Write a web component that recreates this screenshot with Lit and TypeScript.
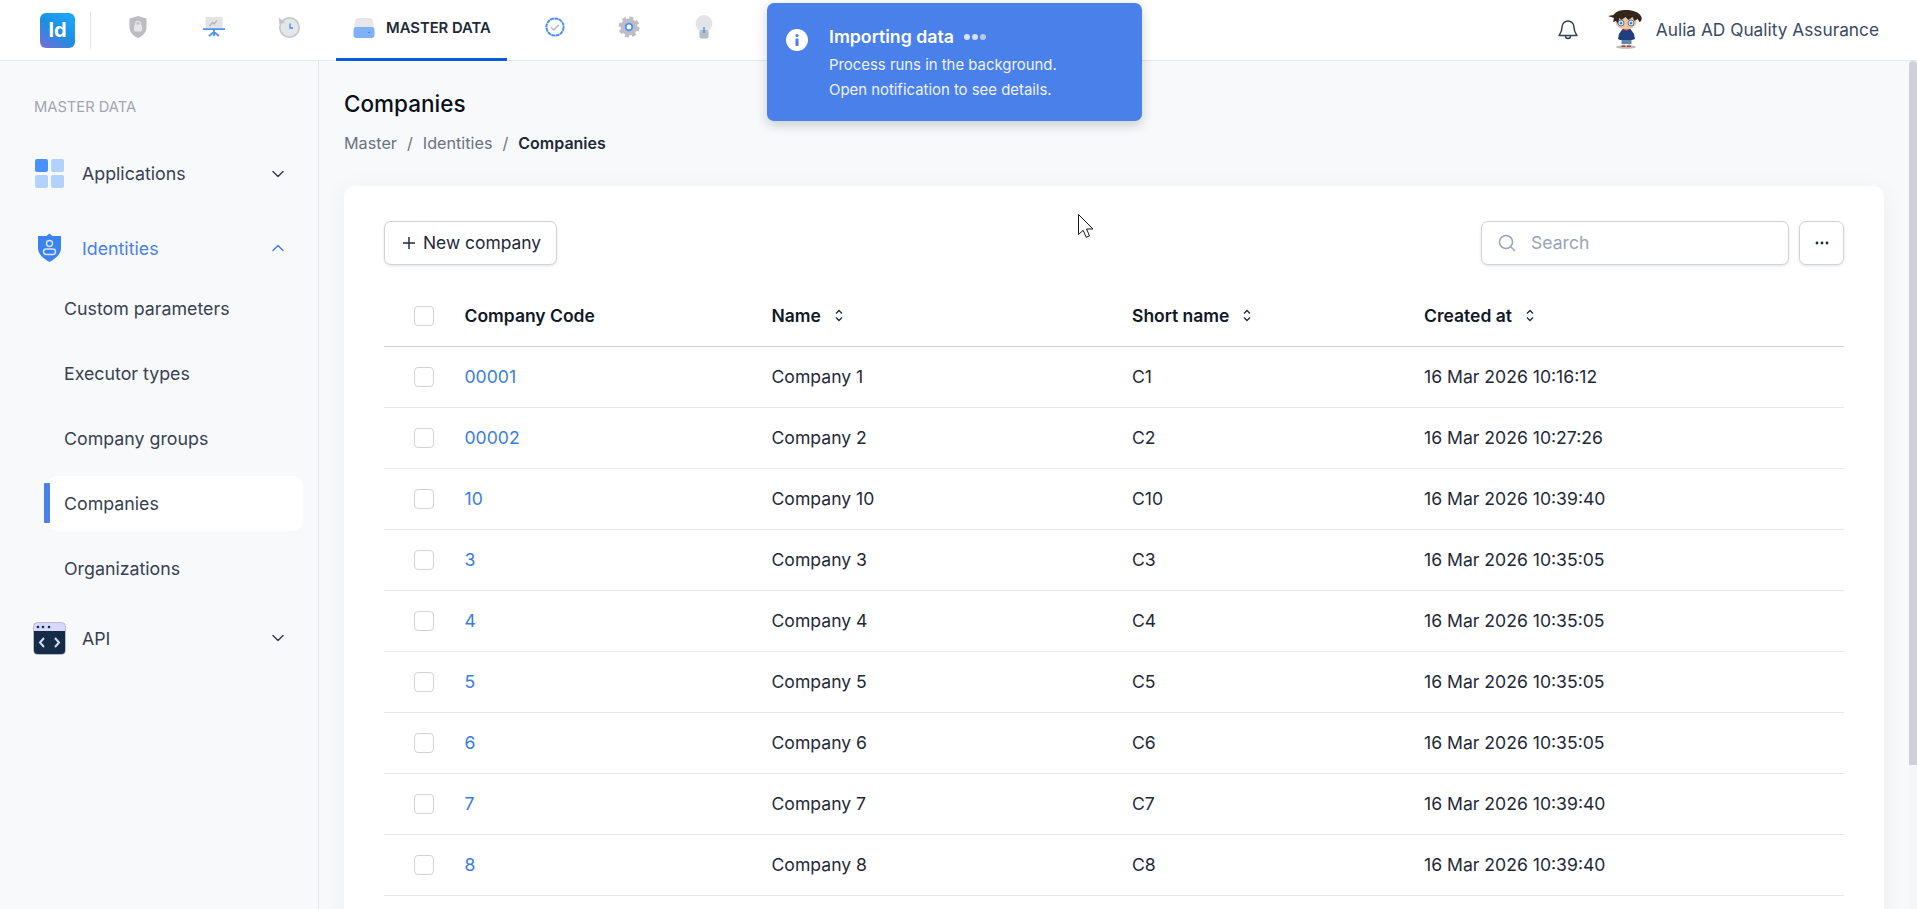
import { LitElement, html, css, svg } from "lit";
import { customElement } from "lit/decorators.js";

const rows = [
  ["00001", "Company 1", "C1", "16 Mar 2026 10:16:12"],
  ["00002", "Company 2", "C2", "16 Mar 2026 10:27:26"],
  ["10", "Company 10", "C10", "16 Mar 2026 10:39:40"],
  ["3", "Company 3", "C3", "16 Mar 2026 10:35:05"],
  ["4", "Company 4", "C4", "16 Mar 2026 10:35:05"],
  ["5", "Company 5", "C5", "16 Mar 2026 10:35:05"],
  ["6", "Company 6", "C6", "16 Mar 2026 10:35:05"],
  ["7", "Company 7", "C7", "16 Mar 2026 10:39:40"],
  ["8", "Company 8", "C8", "16 Mar 2026 10:39:40"],
];

const shieldIcon = html`<svg width="22" height="24" viewBox="0 0 22 24">
  <path d="M11 1l8.5 2.6v8.6c0 5-3.6 8.800-8.500 10.800C6.100 21 2.500 17.200 2.500 12.200V3.600z" fill="#bcbcc1"/>
  <rect x="7" y="9.500" width="8" height="7" rx="1.500" fill="#e6e6e9"/>
  <path d="M8.800 10V8.500a2.200 2.200 0 014.400 0V10" fill="none" stroke="#e6e6e9" stroke-width="1.300"/>
</svg>`;

const boardIcon = html`<svg width="24" height="24" viewBox="0 0 24 24">
  <rect x="3.500" y="2" width="17" height="12" fill="#e3e3e6"/>
  <path d="M7.500 11l3-3.500 1.500 1.500 3-3.500" fill="none" stroke="#b4b4ba" stroke-width="1.200"/>
  <rect x="1" y="13.300" width="22" height="1.700" fill="#4a90f5"/>
  <path d="M12 15v6M12 17l-5 4M12 17l5 4" fill="none" stroke="#4a90f5" stroke-width="1.800"/>
</svg>`;

const historyIcon = html`<svg width="24" height="24" viewBox="0 0 24 24">
  <circle cx="12.500" cy="12.500" r="9.700" fill="#e5e6ea" stroke="#c5c6cb" stroke-width="1.600"/>
  <path d="M1.800 2.500l.5 6.500 6-1.500z" fill="#c5c6cb"/>
  <path d="M13 8.500V13h3" fill="none" stroke="#3f8cf2" stroke-width="1.300"/>
</svg>`;

const driveIcon = html`<svg width="22" height="22" viewBox="0 0 22 22">
  <path d="M1 12L2 4C2.200 2 3.500 1 5.500 1h11c2 0 3.300 1 3.500 3l1 8z" fill="#e7e7e9"/>
  <rect x="0.500" y="10" width="21" height="11" rx="3" fill="#7fb0fa"/>
  <circle cx="16" cy="15.500" r=".8" fill="#3f7fe0"/>
</svg>`;

const checkIcon = html`<svg width="22" height="22" viewBox="0 0 22 22">
  <circle cx="11" cy="11" r="8.600" fill="#fff" stroke="#4a90f5" stroke-width="2" stroke-dasharray="3.900 .5"/>
  <path d="M7 11.300l2.800 2.600 5-5" fill="none" stroke="#bdbdc2" stroke-width="1.700"/>
</svg>`;

const gearIcon = html`<svg width="22" height="22" viewBox="0 0 22 22">
  <circle cx="11" cy="11" r="8.500" fill="#bdbdc5"/>
  <circle cx="11" cy="11" r="9" fill="none" stroke="#bdbdc5" stroke-width="3" stroke-dasharray="4 3.070"/>
  <circle cx="11" cy="11" r="3.300" fill="#fff" stroke="#4a90f5" stroke-width="1.800"/>
</svg>`;

const bulbIcon = html`<svg width="20" height="26" viewBox="0 0 20 26">
  <path d="M10 1a8.500 8.500 0 00-8.500 8.500c0 3.500 2.300 5.300 3.800 7.500h9.400c1.500-2.200 3.800-4 3.800-7.500A8.500 8.500 0 0010 1z" fill="#e4e4e7"/>
  <rect x="5.500" y="16" width="9" height="8.500" rx="2" fill="#bcbcc3"/>
  <rect x="9.300" y="13" width="1.400" height="6" fill="#4a90f5"/>
</svg>`;

const avatar = svg`<svg width="36" height="40" viewBox="0 0 36 40">
  <ellipse cx="18" cy="37" rx="10" ry="1.800" fill="#b9bbb9"/>
  <rect x="14" y="33" width="3" height="3.500" fill="#e8d8c8"/><rect x="19.500" y="33" width="3" height="3.500" fill="#e8d8c8"/>
  <rect x="13.500" y="35.500" width="4" height="1.400" fill="#a33"/><rect x="19" y="35.500" width="4" height="1.400" fill="#a33"/>
  <path d="M13.500 28h10v6h-10z" fill="#6384ab"/>
  <path d="M14.500 19h8l3.500 5 1 5-3 1H12l-2-1 1-5z" fill="#1f3f7f"/>
  <path d="M15.500 19h6l-3 2.500z" fill="#c9302c"/>
  <ellipse cx="18" cy="12" rx="10.500" ry="7.500" fill="#eec49c"/>
  <path d="M0 6l5.500-1C8 1 13 0 18 0c7 0 13 2 15.500 7 .5 2.500 0 4.500-2 5l-2-3-3 2-2-4-4 3-3-3-4 3-2-2-1.500 6-2-3-3 1 1-4z" fill="#33241d"/>
  <circle cx="13" cy="13" r="3" fill="#cfe0f0" stroke="#4d6e9c" stroke-width=".9"/>
  <circle cx="23" cy="13" r="3" fill="#cfe0f0" stroke="#4d6e9c" stroke-width=".9"/>
  <circle cx="13" cy="13.200" r="1.100" fill="#2f6fb5"/><circle cx="23" cy="13.200" r="1.100" fill="#2f6fb5"/>
</svg>`;

const chevronDown = html`<svg class="chev" width="14" height="14" viewBox="0 0 14 14"><path d="M2 4.500l5 5 5-5" fill="none" stroke="#374151" stroke-width="1.500" stroke-linecap="round" stroke-linejoin="round"/></svg>`;
const chevronUp = html`<svg class="chev" width="14" height="14" viewBox="0 0 14 14"><path d="M2 9.500l5-5 5 5" fill="none" stroke="#4a80ea" stroke-width="1.500" stroke-linecap="round" stroke-linejoin="round"/></svg>`;
const sortIcon = html`<svg class="sort" width="8" height="13" viewBox="0 0 8 13"><path d="M1 4.500l3-3 3 3M1 8.500l3 3 3-3" fill="none" stroke="#1f2937" stroke-width="1.300"/></svg>`;

@customElement("app-root")
export class AppRoot extends LitElement {
  static styles = css`
    :host {
      display: block;
      height: 909px;
      overflow: hidden;
      position: relative;
      font-family: Inter, "Noto Sans", sans-serif;
      font-size: 17.6px;
      color: #1f2937;
      background: #f8f9fb;
    }
    .topbar {
      height: 60px;
      border-bottom: 1px solid #e8e9ec;
      background: #fff;
      display: flex;
      align-items: center;
      padding-left: 40px;
    }
    .logo {
      width: 35px;
      height: 35px;
      border-radius: 6px;
      background: linear-gradient(215deg, #1ca6fb 10%, #1b8fe2 50%, #7a6bd8 100%);
      color: #fff;
      font-size: 20px;
      font-weight: 700;
      display: flex;
      align-items: center;
      justify-content: center;
    }
    .divider {
      width: 1px;
      height: 37px;
      background: #e3e4e7;
      margin: 0 15px;
    }
    .nav-icon {
      width: 75px;
      height: 60px;
      display: flex;
      align-items: center;
      justify-content: center;
      padding-bottom: 6px;
      box-sizing: border-box;
    }
    .tab {
      height: 60px;
      width: 171px;
      margin: 0 10px 0 10px;
      box-sizing: border-box;
      border-bottom: 3px solid #0a5bd6;
      display: flex;
      align-items: center;
      padding: 0 0 3px 17px;
      gap: 11px;
      font-size: 14.800px;
      font-weight: 600;
      color: #1f2937;
      margin-bottom: -1px;
    }
    .spacer {
      flex: 1;
    }
    .bell {
      display: block;
      margin-right: 29px;
    }
    .user {
      display: flex;
      align-items: center;
      gap: 12px;
      padding-right: 38px;
      font-size: 17.300px;
      color: #3a4a63;
    }
    .user span {
      padding-bottom: 2px;
    }
    .body {
      display: flex;
      height: 848px;
    }
    .sidebar {
      width: 319px;
      flex: none;
      box-sizing: border-box;
      border-right: 1px solid #e5e6ea;
      padding-top: 35.500px;
      font-size: 17.800px;
      color: #374151;
    }
    .side-title {
      font-size: 14.700px;
      color: #a1a6b1;
      padding-left: 34px;
      line-height: 20px;
      margin-bottom: 29.500px;
    }
    .group {
      display: flex;
      align-items: center;
      height: 55px;
      position: relative;
      padding-left: 82px;
      padding-right: 33px;
    }
    .group svg.ic {
      position: absolute;
    }
    .group .label {
      flex: 1;
    }
    .group.open {
      color: #4a80ea;
      margin-top: 19.500px;
    }
    .chev {
      display: block;
    }
    .sub {
      height: 55px;
      margin: 0 15px 10px 47px;
      padding-left: 17px;
      display: flex;
      align-items: center;
      border-radius: 10px;
      position: relative;
    }
    .subs {
      margin-top: 5px;
    }
    .sub.active {
      background: #fff;
    }
    .sub.active::before {
      content: "";
      position: absolute;
      left: -3px;
      top: 7px;
      width: 6px;
      height: 40px;
      background: #4a80ea;
      border-radius: 1px;
    }
    .api {
      margin-top: 15px;
    }
    .main {
      flex: 1;
      padding: 0 25px;
      overflow: hidden;
    }
    h1 {
      margin: 0;
      padding-top: 28px;
      font-size: 22.500px;
      line-height: 30px;
      font-weight: 500;
      color: #0b0f19;
    }
    .crumbs {
      display: flex;
      gap: 10px;
      margin-top: 12px;
      font-size: 16.200px;
      line-height: 24px;
      color: #6b7280;
    }
    .crumbs b {
      font-size: 16px;
      font-weight: 600;
      color: #1f2937;
    }
    .card {
      margin-top: 31px;
      height: 800px;
      background: #fff;
      border-radius: 10px;
      padding: 35px 40px 0;
      box-shadow: 0 4px 24px rgba(17, 24, 39, 0.05);
    }
    .toolbar {
      display: flex;
      align-items: center;
      gap: 10px;
      margin-bottom: 20px;
    }
    .btn {
      height: 44px;
      box-sizing: border-box;
      display: flex;
      align-items: center;
      border: 1px solid #d1d3da;
      border-radius: 7px;
      background: #fff;
      box-shadow: 0 1px 3px rgba(17, 24, 39, 0.12);
    }
    .btn span {
      padding-bottom: 2px;
    }
    .new {
      width: 173px;
      padding-left: 17px;
      gap: 7px;
      font-size: 17.400px;
      color: #1f2937;
    }
    .search {
      width: 308px;
      margin-left: auto;
      padding-left: 15px;
      gap: 14px;
      color: #9ca3b4;
    }
    .more {
      width: 45px;
      justify-content: center;
    }
    table {
      border-collapse: collapse;
      table-layout: fixed;
      width: 1460px;
    }
    th,
    td {
      height: 60px;
      padding: 0;
      text-align: left;
      border-bottom: 1px solid #e6e7ea;
    }
    td a,
    .cell {
      position: relative;
      top: -1px;
    }
    th {
      height: 61px;
      font-size: 17.500px;
      font-weight: 600;
      color: #111827;
      border-bottom-color: #cfd1d9;
    }
    th .head {
      display: flex;
      align-items: center;
      gap: 14px;
    }
    .box {
      display: block;
      width: 20px;
      height: 20px;
      margin-left: 30px;
      box-sizing: border-box;
      border: 1px solid #d1d3da;
      border-radius: 4px;
      background: #fff;
    }
    td a {
      color: #3b7ddd;
      text-decoration: none;
    }
    .scroll {
      width: 8px;
      flex: none;
      position: relative;
      background: #f5f6f8;
    }
    .thumb {
      position: absolute;
      left: 0;
      top: 0;
      width: 8px;
      height: 704px;
      background: #ced1da;
      border-radius: 4px 4px 0 0;
    }
    .toast {
      position: absolute;
      left: 767px;
      top: 3px;
      width: 375px;
      height: 118px;
      box-sizing: border-box;
      background: #4a80ea;
      border-radius: 7px;
      box-shadow: 0 4px 12px rgba(17, 24, 39, 0.2);
      color: #fff;
      padding: 21px 0 0 62px;
    }
    .toast svg.info {
      position: absolute;
      left: 19px;
      top: 26px;
    }
    .toast .t {
      display: flex;
      align-items: center;
      gap: 10px;
      font-size: 17.700px;
      font-weight: 600;
      line-height: 26px;
    }
    .dots {
      display: flex;
      gap: 2px;
    }
    .dots i {
      width: 6px;
      height: 6px;
      border-radius: 50%;
      background: #d5e2fb;
    }
    .dots i:last-child {
      background: #b9c8e6;
    }
    .toast p {
      margin: 3px 0 0;
      font-size: 14.900px;
      line-height: 25px;
      color: #eef3fe;
    }
    .cursor {
      position: absolute;
      left: 1078px;
      top: 214px;
    }
  `;

  render() {
    return html`
      <div class="topbar">
        <div class="logo">Id</div>
        <div class="divider"></div>
        <div class="nav-icon" style="margin-left:-6px">${shieldIcon}</div>
        <div class="nav-icon" style="margin-left:1px">${boardIcon}</div>
        <div class="nav-icon">${historyIcon}</div>
        <div class="tab">${driveIcon}<span>MASTER DATA</span></div>
        <div class="nav-icon">${checkIcon}</div>
        <div class="nav-icon" style="margin-left:-1px">${gearIcon}</div>
        <div class="nav-icon">${bulbIcon}</div>
        <div class="spacer"></div>
        <svg class="bell" width="22" height="24" viewBox="0 0 22 24" fill="none" stroke="#374151" stroke-width="1.500" stroke-linejoin="round">
          <path d="M11 3a6 6 0 00-6 6c0 5-2 7-3 8.500h18c-1-1.500-3-3.500-3-8.500a6 6 0 00-6-6z"/>
          <path d="M8.500 18a2.500 2.500 0 005 0"/>
        </svg>
        <div class="user">${avatar}<span>Aulia AD Quality Assurance</span></div>
      </div>

      <div class="body">
        <aside class="sidebar">
          <div class="side-title">MASTER DATA</div>
          <div class="group">
            <svg class="ic" style="left:34px;top:12px" width="30" height="30" viewBox="0 0 30 30">
              <rect x="1" y="1" width="13" height="13" rx="2" fill="#4b90fb"/>
              <rect x="17" y="1" width="13" height="13" rx="2" fill="#b3d1fd"/>
              <rect x="1" y="17" width="13" height="13" rx="2" fill="#b3d1fd"/>
              <rect x="17" y="17" width="13" height="13" rx="2" fill="#b3d1fd"/>
            </svg>
            <span class="label">Applications</span>${chevronDown}
          </div>
          <div class="group open">
            <svg class="ic" style="left:37px;top:12px" width="25" height="30" viewBox="0 0 25 30">
              <path d="M12.500 0.500l3 2.500 8.500 0v12c0 6-5 10.500-11.500 14C6 25.500 1 21 1 15V3h8.500z" fill="#3c82ee"/>
              <circle cx="12.500" cy="10.500" r="3" fill="none" stroke="#d6e6fd" stroke-width="1.400"/>
              <rect x="6.500" y="16" width="12" height="5.500" rx="2.700" fill="none" stroke="#d6e6fd" stroke-width="1.400"/>
            </svg>
            <span class="label">Identities</span>${chevronUp}
          </div>
          <div class="subs">
            <div class="sub">Custom parameters</div>
            <div class="sub">Executor types</div>
            <div class="sub">Company groups</div>
            <div class="sub active">Companies</div>
            <div class="sub">Organizations</div>
          </div>
          <div class="group api">
            <svg class="ic" style="left:33px;top:11px" width="33" height="33" viewBox="0 0 33 33">
              <rect x=".5" y=".5" width="32" height="32" rx="4" fill="#d8d8fb" stroke="#b8bbd8"/>
              <path d="M1 9h31v19.500a3.500 3.500 0 01-3.500 3.500h-24A3.500 3.500 0 011 28.500z" fill="#152c47"/>
              <circle cx="5" cy="5" r="1.300" fill="#152c47"/><circle cx="10" cy="5" r="1.300" fill="#152c47"/><circle cx="16" cy="5" r="1.300" fill="#152c47"/>
              <path d="M11 16l-4 4.500 4 4.500M22 16l4 4.500-4 4.500" fill="none" stroke="#d8d8fb" stroke-width="2"/>
            </svg>
            <span class="label">API</span>${chevronDown}
          </div>
        </aside>

        <main class="main">
          <h1>Companies</h1>
          <div class="crumbs"><span>Master</span><span>/</span><span>Identities</span><span>/</span><b>Companies</b></div>
          <section class="card">
            <div class="toolbar">
              <div class="btn new">
                <svg width="14" height="14" viewBox="0 0 14 14"><path d="M7 1v12M1 7h12" stroke="#1f2937" stroke-width="1.400"/></svg>
                <span>New company</span>
              </div>
              <div class="btn search">
                <svg width="20" height="20" viewBox="0 0 20 20" fill="none" stroke="#9ca3af" stroke-width="1.500"><circle cx="9" cy="9" r="6.500"/><path d="M14 14l4 4"/></svg>
                <span>Search</span>
              </div>
              <div class="btn more">
                <svg width="14" height="4" viewBox="0 0 14 4" fill="#1f2937"><circle cx="2" cy="2" r="1.400"/><circle cx="7" cy="2" r="1.400"/><circle cx="12" cy="2" r="1.400"/></svg>
              </div>
            </div>
            <table>
              <colgroup><col style="width:80.500px" /><col style="width:307px" /><col style="width:360.500px" /><col style="width:292px" /><col style="width:420px" /></colgroup>
              <thead>
                <tr>
                  <th><span class="box"></span></th>
                  <th>Company Code</th>
                  <th><div class="head">Name ${sortIcon}</div></th>
                  <th><div class="head">Short name ${sortIcon}</div></th>
                  <th><div class="head">Created at ${sortIcon}</div></th>
                </tr>
              </thead>
              <tbody>
                ${rows.map(
                  (r) => html`<tr>
                    <td><span class="box"></span></td>
                    <td><a>${r[0]}</a></td>
                    <td><span class="cell">${r[1]}</span></td>
                    <td><span class="cell">${r[2]}</span></td>
                    <td><span class="cell">${r[3]}</span></td>
                  </tr>`
                )}
              </tbody>
            </table>
          </section>
        </main>
        <div class="scroll"><div class="thumb"></div></div>
      </div>

      <div class="toast">
        <svg class="info" width="22" height="22" viewBox="0 0 22 22">
          <circle cx="11" cy="11" r="11" fill="#fff"/>
          <circle cx="11" cy="6.500" r="1.600" fill="#4a80ea"/>
          <rect x="9.500" y="9.500" width="3" height="7.500" rx=".8" fill="#4a80ea"/>
        </svg>
        <div class="t">Importing data <span class="dots"><i></i><i></i><i></i></span></div>
        <p>Process runs in the background.<br />Open notification to see details.</p>
      </div>

      <svg class="cursor" width="16" height="25" viewBox="0 0 16 25">
        <path d="M.5.500v20l4.700-4.200 3 7 3.300-1.400-3-6.900h6.500z" fill="#fff" stroke="#1a1a1a" stroke-width="1"/>
      </svg>
    `;
  }
}
